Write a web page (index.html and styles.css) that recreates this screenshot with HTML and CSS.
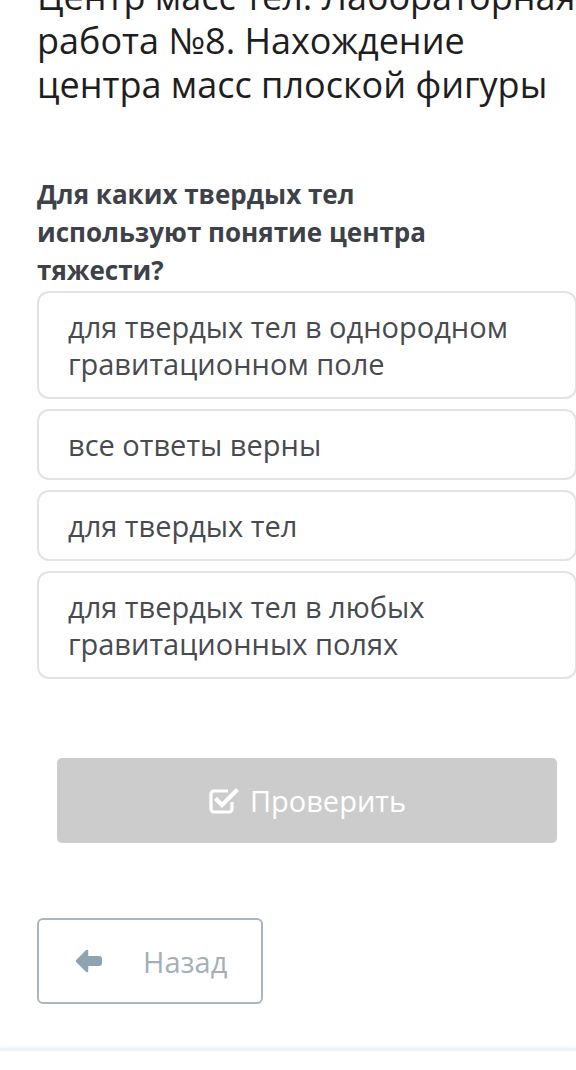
FILE: index.html
```html
<!DOCTYPE html>
<html lang="ru">
<head>
  <meta charset="UTF-8" />
  <meta name="viewport" content="width=device-width, initial-scale=1.0"/>
  <title>Центр масс тел</title>
  <link rel="stylesheet" href="styles.css">
</head>
<body>
  <div class="page">
    <h1 class="lesson-title">Центр масс тел. Лабораторная работа №8. Нахождение центра масс плоской фигуры</h1>

    <h3 class="question">Для каких твердых тел используют понятие центра тяжести?</h3>

    <div class="answers">
      <div class="answer">для твердых тел в однородном гравитационном поле</div>
      <div class="answer">все ответы верны</div>
      <div class="answer">для твердых тел</div>
      <div class="answer">для твердых тел в любых гравитационных полях</div>
    </div>

    <button class="check-btn" type="button">
      <svg class="check-icon" viewBox="0 0 32 28" width="32" height="28">
        <path d="M24 15v7a3 3 0 0 1-3 3H6a3 3 0 0 1-3-3V7a3 3 0 0 1 3-3h14" fill="none" stroke="#fff" stroke-width="3.2"/>
        <path d="M9 13l5 5L28 4" fill="none" stroke="#fff" stroke-width="4.2" stroke-linecap="square"/>
      </svg>
      Проверить
    </button>

    <button class="back-btn" type="button">
      <svg class="back-icon" viewBox="0 0 28 24" width="28" height="24">
        <path d="M2 12L12 2v20z" fill="#8fa3b3" stroke="#8fa3b3" stroke-width="2.5" stroke-linejoin="round"/>
        <rect x="10" y="7" width="17" height="10" rx="3" fill="#8fa3b3"/>
      </svg>
      <span>Назад</span>
    </button>
  </div>

  <footer class="bottom-bar"></footer>
</body>
</html>
```

FILE: styles.css
```css
body {
  margin: 0;
  font-family: "Open Sans", "Noto Sans", sans-serif;
  background: #fff;
  overflow: hidden;
}

.page {
  padding-left: 37px;
  width: 540px;
}

.lesson-title {
  margin: -25px 0 0;
  max-width: 545px;
  font-size: 36px;
  line-height: 44px;
  font-weight: 400;
  color: #1e1e1e;
}

.question {
  margin: 68px 0 2px;
  font-size: 26px;
  line-height: 38px;
  font-weight: 700;
  color: #3d4148;
  width: 460px;
}

.answers {
  display: flex;
  flex-direction: column;
  gap: 10px;
}

.answer {
  border: 2px solid #e3e3e3;
  border-radius: 12px;
  padding: 15px 20px 15px 29px;
  font-size: 29px;
  line-height: 37px;
  color: #474b50;
}

.check-btn {
  display: flex;
  align-items: center;
  justify-content: center;
  gap: 10px;
  width: 500px;
  height: 85px;
  margin: 79px 0 0 20px;
  border: none;
  border-radius: 5px;
  background: #cccccc;
  color: #fff;
  font-family: inherit;
  font-size: 29px;
}

.back-btn {
  display: flex;
  align-items: center;
  width: 226px;
  height: 86px;
  margin-top: 75px;
  padding: 0 0 0 36px;
  border: 2px solid #aab5be;
  border-radius: 6px;
  background: #fff;
  color: #a3afb9;
  font-family: inherit;
  font-size: 29px;
}

.back-btn span {
  margin-left: 40px;
}

.bottom-bar {
  margin-top: 44px;
  height: 3px;
  background: #eef3f7;
  box-shadow: 0 0 4px rgba(200, 220, 235, 0.5);
}
```
